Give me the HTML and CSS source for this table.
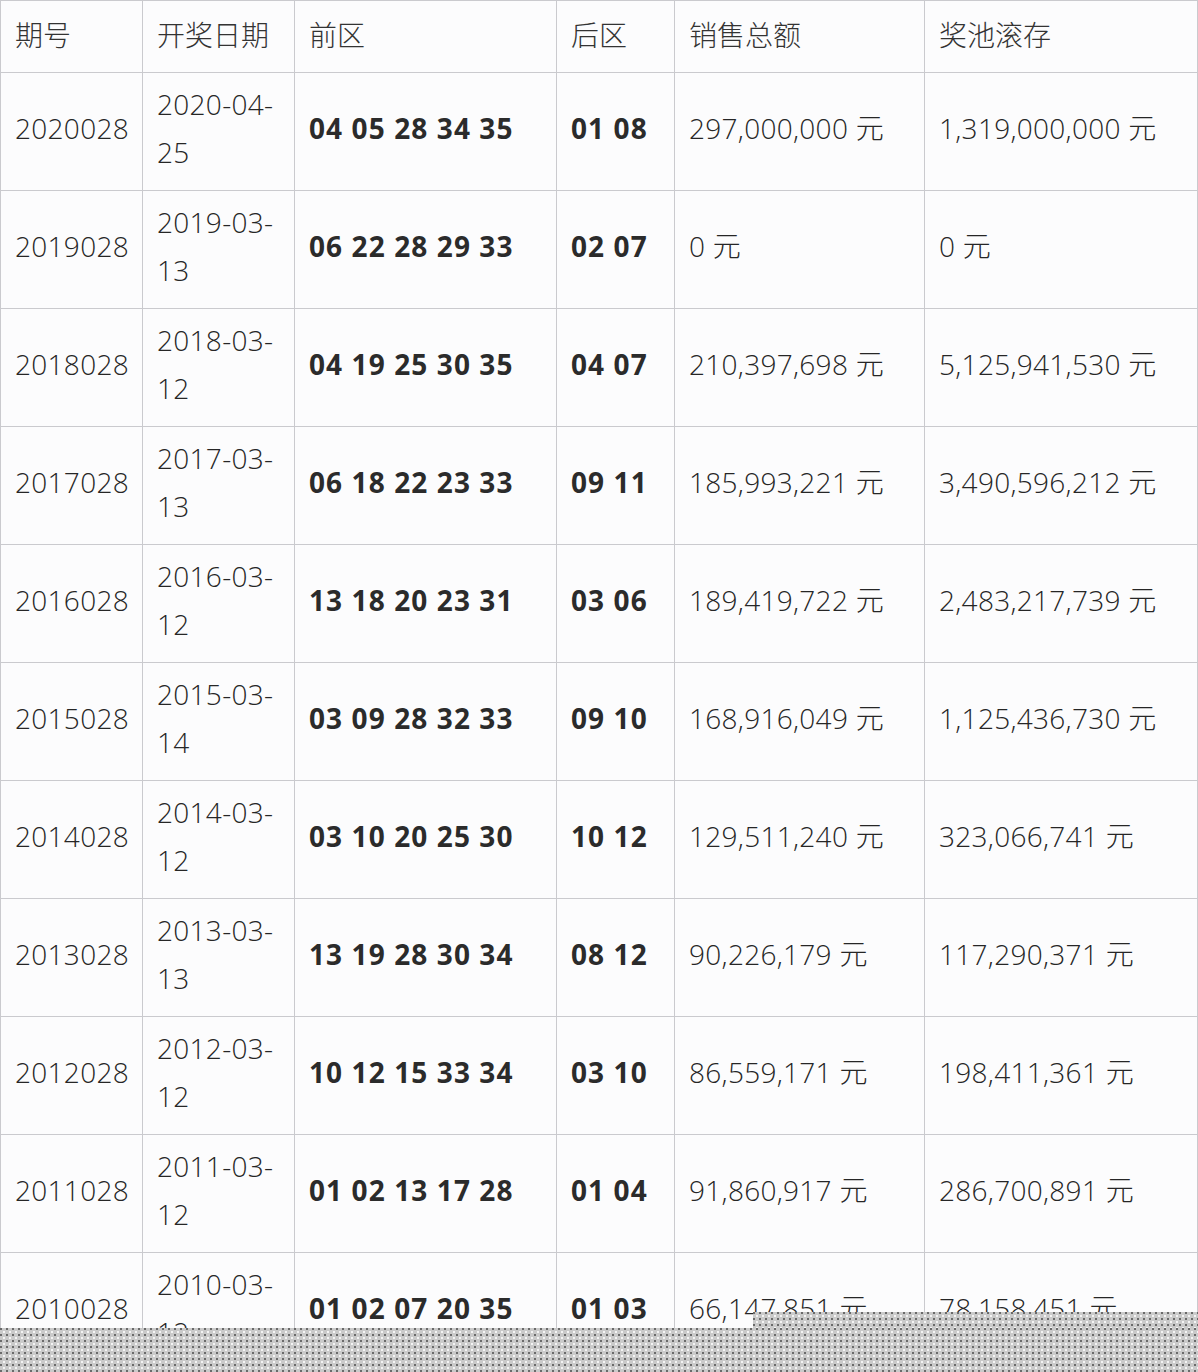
FILE: index.html
```html
<!DOCTYPE html>
<html lang="zh-CN">
<head>
<meta charset="utf-8">
<title>大乐透开奖</title>
<link rel="stylesheet" href="styles.css">
</head>
<body>
<table class="draws">
  <colgroup>
    <col class="c1"><col class="c2"><col class="c3"><col class="c4"><col class="c5"><col class="c6">
  </colgroup>
  <thead>
    <tr><th>期号</th><th>开奖日期</th><th>前区</th><th>后区</th><th>销售总额</th><th>奖池滚存</th></tr>
  </thead>
  <tbody>
    <tr><td>2020028</td><td>2020-04-<wbr>25</td><td class="b">04 05 28 34 35</td><td class="b">01 08</td><td>297,000,000 元</td><td>1,319,000,000 元</td></tr>
    <tr><td>2019028</td><td>2019-03-<wbr>13</td><td class="b">06 22 28 29 33</td><td class="b">02 07</td><td>0 元</td><td>0 元</td></tr>
    <tr><td>2018028</td><td>2018-03-<wbr>12</td><td class="b">04 19 25 30 35</td><td class="b">04 07</td><td>210,397,698 元</td><td>5,125,941,530 元</td></tr>
    <tr><td>2017028</td><td>2017-03-<wbr>13</td><td class="b">06 18 22 23 33</td><td class="b">09 11</td><td>185,993,221 元</td><td>3,490,596,212 元</td></tr>
    <tr><td>2016028</td><td>2016-03-<wbr>12</td><td class="b">13 18 20 23 31</td><td class="b">03 06</td><td>189,419,722 元</td><td>2,483,217,739 元</td></tr>
    <tr><td>2015028</td><td>2015-03-<wbr>14</td><td class="b">03 09 28 32 33</td><td class="b">09 10</td><td>168,916,049 元</td><td>1,125,436,730 元</td></tr>
    <tr><td>2014028</td><td>2014-03-<wbr>12</td><td class="b">03 10 20 25 30</td><td class="b">10 12</td><td>129,511,240 元</td><td>323,066,741 元</td></tr>
    <tr><td>2013028</td><td>2013-03-<wbr>13</td><td class="b">13 19 28 30 34</td><td class="b">08 12</td><td>90,226,179 元</td><td>117,290,371 元</td></tr>
    <tr><td>2012028</td><td>2012-03-<wbr>12</td><td class="b">10 12 15 33 34</td><td class="b">03 10</td><td>86,559,171 元</td><td>198,411,361 元</td></tr>
    <tr><td>2011028</td><td>2011-03-<wbr>12</td><td class="b">01 02 13 17 28</td><td class="b">01 04</td><td>91,860,917 元</td><td>286,700,891 元</td></tr>
    <tr><td>2010028</td><td>2010-03-<wbr>12</td><td class="b">01 02 07 20 35</td><td class="b">01 03</td><td>66,147,851 元</td><td>78,158,451 元</td></tr>
  </tbody>
</table>
<div class="veil veil-wide"></div>
<div class="veil veil-step"></div>
</body>
</html>
```
FILE: styles.css
```css
html, body {
  margin: 0;
  padding: 0;
  background: #fcfcfd;
}
body {
  position: relative;
  width: 1198px;
  height: 1372px;
  overflow: hidden;
  font-family: "Open Sans", "Noto Sans CJK SC", sans-serif;
  color: #262626;
}
.draws {
  border-collapse: collapse;
  table-layout: fixed;
  width: 1197px;
  font-size: 28px;
  line-height: 48px;
}
.c1 { width: 142px; }
.c2 { width: 152px; }
.c3 { width: 262px; }
.c4 { width: 118px; }
.c5 { width: 250px; }
.c6 { width: 273px; }
.draws th,
.draws td {
  border: 1px solid #cacace;
  padding: 0 12px 7px 14px;
  text-align: left;
  vertical-align: middle;
  font-weight: 300;
  letter-spacing: 0.3px;
}
.draws th {
  padding-bottom: 4px;
  letter-spacing: 0;
  color: #333;
}
.draws thead tr { height: 72px; }
.draws tbody tr { height: 118px; }
.draws td.b {
  font-weight: 700;
  letter-spacing: 1.1px;
  color: #2b2b2b;
}
.veil {
  position: absolute;
  background-color: #cacaca;
  background-image:
    radial-gradient(circle at 1px 1px, #6a6a6a 0.9px, transparent 1.2px),
    radial-gradient(circle at 4px 4px, #f4f4f4 0.9px, transparent 1.2px);
  background-size: 6px 6px;
}
.veil-wide {
  left: 0;
  right: 0;
  top: 1328px;
  bottom: 0;
}
.veil-step {
  left: 753px;
  right: 0;
  top: 1312px;
  height: 16px;
}
```
